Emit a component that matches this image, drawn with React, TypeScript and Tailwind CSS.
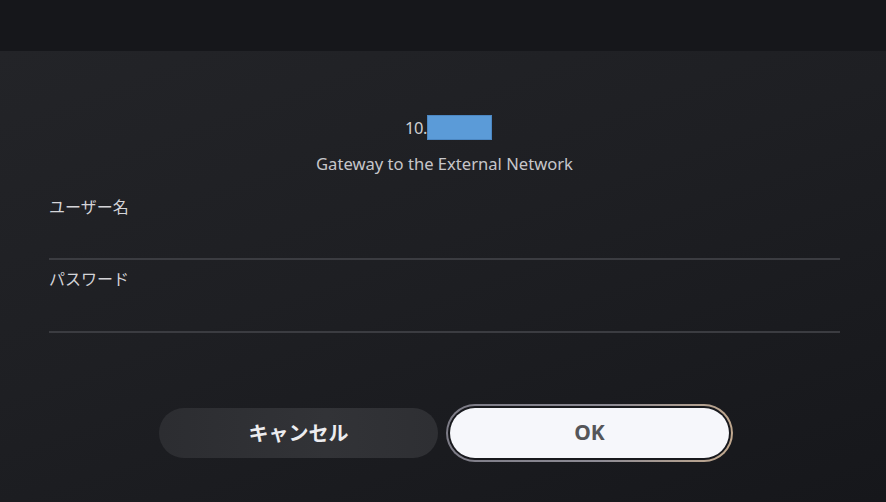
export default function App() {
  return (
    <div className="w-[886px] h-[502px] flex flex-col overflow-hidden bg-[#16171b] font-['Noto_Sans','Noto_Sans_CJK_JP',sans-serif]">
      {/* top bar */}
      <div className="h-[51px] shrink-0 bg-[#16171b]" />

      {/* dialog body */}
      <div className="flex-1 flex flex-col pl-[49px] pr-[46px] bg-[linear-gradient(160deg,#232428_0%,#1e1f23_45%,#16171b_100%)]">
        <div className="mt-[64px] flex justify-center items-center h-[25px] pl-[8px]">
          <span className="text-[16.5px] leading-5 tracking-[-0.5px] text-[#cfcfd2]">10.</span>
          <span className="w-[65px] h-[25px] bg-[#5b9bd8] border border-[#4c87c2]" />
        </div>
        <p className="mt-[14px] text-center text-[16.6px] leading-5 text-[#c6c6ca]">
          Gateway to the External Network
        </p>

        <div className="mt-[20px]">
          <p className="text-[16px] leading-6 text-[#d4d4d8] font-['Noto_Sans_CJK_JP',sans-serif]">ユーザー名</p>
          <div className="h-10" />
          <div className="h-[2px] bg-[#3b3c41]" />
        </div>

        <div className="mt-[6px]">
          <p className="text-[16px] leading-6 text-[#d4d4d8] font-['Noto_Sans_CJK_JP',sans-serif]">パスワード</p>
          <div className="h-[41px]" />
          <div className="h-[2px] bg-[#3b3c41]" />
        </div>

        <div className="mt-[71px] flex items-center justify-center gap-[8px] pl-[3px]">
          <button className="w-[279px] h-[50px] rounded-full bg-[linear-gradient(90deg,#2c2d31,#323337_60%,#2e2f33)] text-[20px] font-bold text-[#ececef] font-['Noto_Sans_CJK_JP',sans-serif]">
            キャンセル
          </button>
          <div className="rounded-full p-[2px] bg-[linear-gradient(100deg,#7c7b86_0%,#8d8b94_55%,#c2a98e_100%)]">
            <div className="rounded-full p-[2px] bg-[#18191d]">
              <button className="w-[279px] h-[50px] rounded-full bg-[#f6f7fb] text-[21px] font-bold text-[#555659] font-['Noto_Sans',sans-serif]">
                OK
              </button>
            </div>
          </div>
        </div>
      </div>
    </div>
  );
}
